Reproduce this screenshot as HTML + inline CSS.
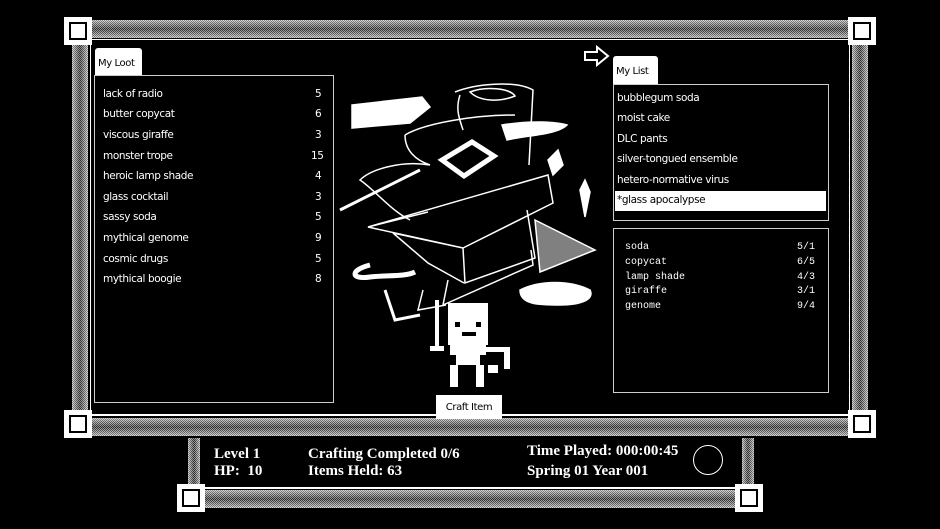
<!DOCTYPE html>
<html><head><meta charset="utf-8"><style>
*{margin:0;padding:0;box-sizing:border-box}
body{width:940px;height:529px;background:#000;position:relative;overflow:hidden;font-family:"DejaVu Sans","Liberation Sans",sans-serif;color:#fff}
.d{position:absolute;background-color:#8a8a8a}
.dh{background-image:linear-gradient(rgba(255,255,255,.45),rgba(0,0,0,.25) 50%,rgba(255,255,255,.45)),repeating-conic-gradient(#bbb 0 25%,#333 0 50%);background-size:100% 100%,2px 2px}
.dv{background-image:linear-gradient(90deg,rgba(255,255,255,.45),rgba(0,0,0,.25) 50%,rgba(255,255,255,.45)),repeating-conic-gradient(#bbb 0 25%,#333 0 50%);background-size:100% 100%,2px 2px}
.c{position:absolute;width:28px;height:28px;background:#fff;border:3px solid #fff}
.c::after{content:"";position:absolute;left:2px;top:2px;right:2px;bottom:2px;border:2px solid #000;background:#fff}
.ln{position:absolute;background:#fff}
.box{position:absolute;border:1px solid #ccc}
.tab{position:absolute;background:#fff;color:#000;font-size:10px;padding:10px 3px 0;border-radius:3px 3px 0 0;white-space:nowrap;letter-spacing:-.4px}
.row{position:absolute;font-size:10.5px;letter-spacing:-.4px;white-space:nowrap}
.mono{font-family:"Liberation Mono",monospace;font-size:10px;letter-spacing:0}
.g{font-family:"Liberation Serif",serif;font-weight:bold;font-size:15px;position:absolute;white-space:nowrap}
</style></head><body>
<div class="d dh" style="left:78px;top:20px;width:784px;height:18px"></div>
<div class="d dh" style="left:78px;top:418px;width:784px;height:18px"></div>
<div class="d dv" style="left:72px;top:40px;width:16px;height:380px"></div>
<div class="d dv" style="left:852px;top:40px;width:16px;height:380px"></div>
<div class="ln" style="left:90px;top:39px;width:760px;height:1px"></div>
<div class="ln" style="left:90px;top:414px;width:760px;height:2px"></div>
<div class="ln" style="left:90px;top:40px;width:1px;height:376px"></div>
<div class="ln" style="left:849px;top:40px;width:1px;height:376px"></div>
<div class="c" style="left:64px;top:17px"></div>
<div class="c" style="left:848px;top:17px"></div>
<div class="c" style="left:64px;top:410px"></div>
<div class="c" style="left:848px;top:410px"></div>
<div class="d dv" style="left:188px;top:438px;width:12px;height:50px"></div>
<div class="d dv" style="left:742px;top:438px;width:12px;height:50px"></div>
<div class="d dh" style="left:200px;top:490px;width:545px;height:18px"></div>
<div class="ln" style="left:200px;top:487px;width:542px;height:2px"></div>
<div class="c" style="left:177px;top:484px"></div>
<div class="c" style="left:735px;top:484px"></div>
<div class="g" style="left:214px;top:446px">Level 1</div>
<div class="g" style="left:214px;top:463px">HP:&nbsp; 10</div>
<div class="g" style="left:308px;top:446px">Crafting Completed 0/6</div>
<div class="g" style="left:308px;top:463px">Items Held: 63</div>
<div class="g" style="left:527px;top:443px">Time Played: 000:00:45</div>
<div class="g" style="left:527px;top:463px">Spring 01 Year 001</div>
<div style="position:absolute;left:693px;top:445px;width:30px;height:30px;border:1px solid #fff;border-radius:50%"></div>
<div class="tab" style="left:95px;top:48px;width:47px;height:28px">My Loot</div>
<div class="box" style="left:94px;top:75px;width:240px;height:328px"></div>
<div class="row" style="left:103px;top:88px">lack of radio</div><div class="row" style="left:315px;top:88px">5</div>
<div class="row" style="left:103px;top:108px">butter copycat</div><div class="row" style="left:315px;top:108px">6</div>
<div class="row" style="left:103px;top:129px">viscous giraffe</div><div class="row" style="left:315px;top:129px">3</div>
<div class="row" style="left:103px;top:150px">monster trope</div><div class="row" style="left:311px;top:150px">15</div>
<div class="row" style="left:103px;top:170px">heroic lamp shade</div><div class="row" style="left:315px;top:170px">4</div>
<div class="row" style="left:103px;top:191px">glass cocktail</div><div class="row" style="left:315px;top:191px">3</div>
<div class="row" style="left:103px;top:211px">sassy soda</div><div class="row" style="left:315px;top:211px">5</div>
<div class="row" style="left:103px;top:232px">mythical genome</div><div class="row" style="left:315px;top:232px">9</div>
<div class="row" style="left:103px;top:253px">cosmic drugs</div><div class="row" style="left:315px;top:253px">5</div>
<div class="row" style="left:103px;top:273px">mythical boogie</div><div class="row" style="left:315px;top:273px">8</div>
<svg style="position:absolute;left:583px;top:44px" width="28" height="24"><path d="M2 8h12V3l11 9-11 9v-5H2z" fill="none" stroke="#fff" stroke-width="2"/></svg>
<div class="tab" style="left:613px;top:56px;width:45px;height:29px">My List</div>
<div class="box" style="left:613px;top:84px;width:216px;height:137px"></div>
<div class="row" style="left:617px;top:92px">bubblegum soda</div>
<div class="row" style="left:617px;top:112px">moist cake</div>
<div class="row" style="left:617px;top:133px">DLC pants</div>
<div class="row" style="left:617px;top:153px">silver-tongued ensemble</div>
<div class="row" style="left:617px;top:174px">hetero-normative virus</div>
<div style="position:absolute;left:615px;top:191px;width:211px;height:20px;background:#fff"></div>
<div class="row" style="left:617px;top:194px;color:#000">*glass apocalypse</div>
<div class="box" style="left:613px;top:228px;width:216px;height:165px"></div>
<div class="row mono" style="left:625px;top:242px">soda</div><div class="row mono" style="left:797px;top:242px">5/1</div>
<div class="row mono" style="left:625px;top:257px">copycat</div><div class="row mono" style="left:797px;top:257px">6/5</div>
<div class="row mono" style="left:625px;top:272px">lamp shade</div><div class="row mono" style="left:797px;top:272px">4/3</div>
<div class="row mono" style="left:625px;top:286px">giraffe</div><div class="row mono" style="left:797px;top:286px">3/1</div>
<div class="row mono" style="left:625px;top:301px">genome</div><div class="row mono" style="left:797px;top:301px">9/4</div>
<svg style="position:absolute;left:330px;top:80px" width="280" height="320" viewBox="0 0 280 320" fill="none" stroke="#fff" stroke-width="1.5">
<path d="M22 25l70-8 8 10-20 16-58 5z" fill="#fff"/>
<path d="M125 12c20-8 60-12 78-2l-4 75" />
<path d="M130 15c-5 15 0 25 3 35M140 12c15-6 40-4 45 4-15 6-35 6-45-4z"/>
<path d="M75 55c20-12 70-20 110-20M75 55c0 15 10 25 25 30-30-5-60 5-70 15 15 10 30 30 50 40"/>
<path d="M172 45c30-5 55-3 65 0-10 10-40 10-60 15z" fill="#fff"/>
<path d="M112 80l30-18 22 14-30 20z" stroke-width="5"/>
<path d="M38 147l180-52 5 28-90 45-95-21zM133 168l2 35 70-25-8-48M133 168l-70-15 35 30 36 20M38 147l60-15"/>
<path d="M118 200l-5 25 90-40-2-15M116 225l-28 5 5 -20"/>
<path d="M205 140l60 30-55 22z" fill="#fff" fill-opacity=".5"/>
<path d="M10 130c40-20 60-30 80-40" stroke-width="3"/>
<path d="M40 185c-20 5-20 15 0 12 15-2 35 0 45-5" stroke-width="5"/>
<path d="M190 210c20-10 50-10 70 0 5 10-10 15-30 15-20 0-40 0-40-15z" fill="#fff"/>
<path d="M250 110l5-10 5 12-5 25z" fill="#fff"/>
<path d="M218 80l10-10 5 15-10 10z" fill="#fff"/>
<path d="M55 210l10 30 25-5" stroke-width="3"/>
</svg>
<svg style="position:absolute;left:428px;top:300px" width="90" height="92" viewBox="0 0 90 92" fill="#fff">
<rect x="20" y="3" width="40" height="42"/>
<rect x="27" y="22" width="5" height="5" fill="#000"/><rect x="48" y="22" width="5" height="5" fill="#000"/>
<rect x="34" y="32" width="14" height="4" fill="#000"/>
<rect x="7" y="0" width="4" height="50"/><rect x="2" y="46" width="14" height="5"/>
<rect x="22" y="45" width="36" height="10"/><rect x="28" y="55" width="24" height="10"/>
<rect x="22" y="65" width="8" height="22"/><rect x="48" y="65" width="8" height="22"/>
<rect x="58" y="47" width="24" height="5"/><rect x="76" y="47" width="6" height="22"/><rect x="60" y="65" width="10" height="8"/>
</svg>
<div style="position:absolute;left:436px;top:395px;width:66px;height:24px;background:#fff;color:#000;font-size:10px;letter-spacing:-.4px;text-align:center;line-height:26px;white-space:nowrap">Craft Item</div>
</body></html>
